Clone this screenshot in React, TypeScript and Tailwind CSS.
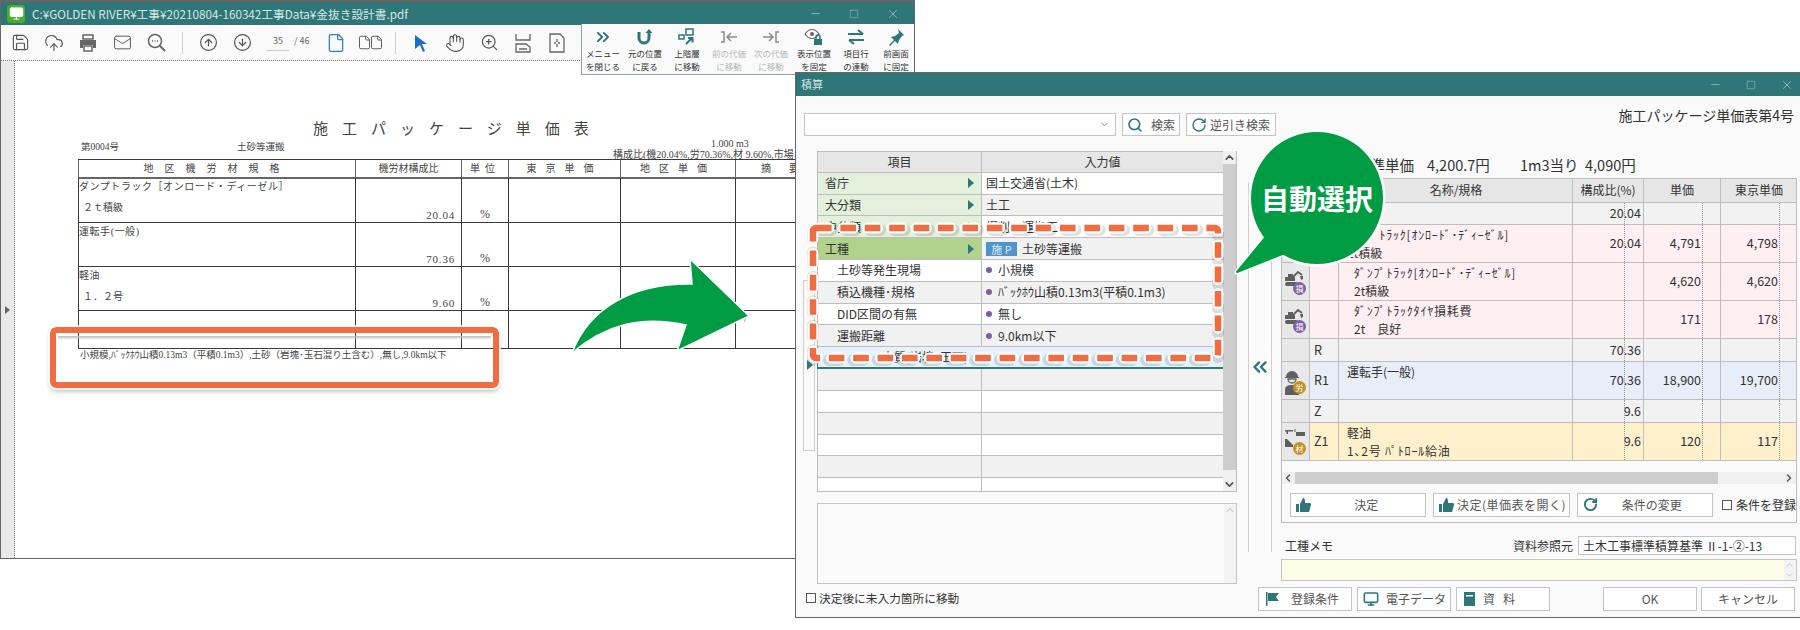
import {
  ChevronDown,
  ChevronLeft,
  ChevronRight,
  ChevronUp,
  ChevronsLeft,
  ChevronsRight,
  CircleArrowDown,
  CircleArrowUp,
  CloudUpload,
  File,
  Hand,
  Mail,
  Minus,
  Monitor,
  RotateCw,
  Save,
  Search,
  Square,
  X,
  ZoomIn,
} from "lucide-react";
import type { ReactNode } from "react";

const TEAL = "#2f7679";

function WinButtons({ gap }: { gap: string }) {
  return (
    <div className={`ml-auto flex items-center text-[#c9dedf] ${gap}`}>
      <Minus size={13} strokeWidth={1} />
      <Square size={10} strokeWidth={1} />
      <X size={14} strokeWidth={1} />
    </div>
  );
}

function Sep({ ml }: { ml: string }) {
  return <div className={`${ml} mr-[8px] h-[22px] w-px bg-[#cfcfcf]`} />;
}

function Tool({ children, w = "w-[34px]" }: { children: ReactNode; w?: string }) {
  return <div className={`flex ${w} shrink-0 items-center justify-center text-[#555]`}>{children}</div>;
}

/* ---------- flyout menu ---------- */
function MenuItem({ icon, a, b, off, w = "w-[42px]" }: { icon: ReactNode; a: string; b: string; off?: boolean; w?: string }) {
  return (
    <div className={`flex ${w} shrink-0 flex-col items-center ${off ? "text-[#b5b5b5]" : "text-[#333]"}`}>
      <div className="flex h-[20px] items-center justify-center">{icon}</div>
      <div className="whitespace-nowrap text-[8.5px] leading-[13px]">{a}</div>
      <div className="whitespace-nowrap text-[8.5px] leading-[13px]">{b}</div>
    </div>
  );
}

function Flyout() {
  return (
    <div className="absolute left-[581px] top-[24px] z-10 flex h-[51px] w-[333px] border-b border-l border-[#8c9fc0] bg-[#fafafa] pt-[3px]">
      <MenuItem
        a="メニュー"
        b="を閉じる"
        icon={<ChevronsRight size={20} color={TEAL} strokeWidth={2.4} />}
      />
      <MenuItem
        a="元の位置"
        b="に戻る"
        icon={
          <svg width="18" height="18" viewBox="0 0 18 18" fill="none" stroke={TEAL} strokeWidth="3">
            <path d="M3 4v6a5 5 0 0 0 10 0V4" />
            <path d="M9.5 5L13 1l3.5 4z" fill={TEAL} strokeWidth="0" />
          </svg>
        }
      />
      <MenuItem
        a="上階層"
        b="に移動"
        icon={
          <svg width="18" height="18" viewBox="0 0 18 18" fill="none" stroke={TEAL} strokeWidth="1.5">
            <rect x="8" y="1" width="7" height="6" />
            <rect x="1" y="7" width="5" height="4" />
            <path d="M8 16l6-6M10 10h4.5v4.5" strokeWidth="2" />
          </svg>
        }
      />
      <MenuItem
        off
        a="前の代価"
        b="に移動"
        icon={
          <svg width="18" height="14" viewBox="0 0 18 14" fill="none" stroke="#8a8a8a" strokeWidth="1.5">
            <path d="M1 2h3v10H1M17 7H8M11 3L7 7l4 4" />
          </svg>
        }
      />
      <MenuItem
        off
        a="次の代価"
        b="に移動"
        icon={
          <svg width="18" height="14" viewBox="0 0 18 14" fill="none" stroke="#8a8a8a" strokeWidth="1.5">
            <path d="M17 2h-3v10h3M1 7h9M7 3l4 4-4 4" />
          </svg>
        }
      />
      <MenuItem
        a="表示位置"
        b="を固定"
        w="w-[44px]"
        icon={
          <svg width="20" height="19" viewBox="0 0 20 19" fill="none">
            <path d="M1 6c4-6 10-6 14 0-4 6-10 6-14 0z" stroke="#666" strokeWidth="1.2" />
            <circle cx="8" cy="6" r="2" fill="#666" />
            <rect x="10" y="11" width="8" height="6" fill={TEAL} />
            <path d="M12 11V9a2 2 0 0 1 4 0v2" stroke={TEAL} strokeWidth="1.5" />
          </svg>
        }
      />
      <MenuItem
        a="項目行"
        b="の連動"
        w="w-[40px]"
        icon={
          <svg width="18" height="16" viewBox="0 0 18 16" fill="none" stroke={TEAL} strokeWidth="2">
            <path d="M1 5h15M11 1l5 4M17 11H2M7 15l-5-4" />
          </svg>
        }
      />
      <MenuItem
        a="前画面"
        b="に固定"
        w="w-[40px]"
        icon={
          <svg width="18" height="18" viewBox="0 0 18 18" fill={TEAL}>
            <path d="M11 1l6 6-2 1-3 4-1 4-3-3-5 5-1-1 5-5-3-3 4-1 4-3z" />
          </svg>
        }
      />
    </div>
  );
}

/* ---------- PDF window ---------- */
function PdfRow({ h, name, sub, ratio, last }: { h: string; name?: string; sub?: string; ratio?: string; last?: boolean }) {
  const cell = "border-b border-r border-[#3a3a3a]";
  return (
    <div className={`grid grid-cols-[278px_106px_47px_112px_115px_200px] ${h}`}>
      <div className={`${cell} border-l text-[10px] leading-[14px]`}>
        <div className="mt-[2px] tracking-[0.55px]">{name}</div>
        {sub && <div className="ml-[4px] mt-[7px]">{sub}</div>}
      </div>
      <div className={`${cell} flex items-end justify-end pr-[6px] text-[11px] leading-[14px] tracking-[0.8px]`}>{ratio}</div>
      <div className={`${cell} flex items-end justify-center text-[12px] leading-[15px]`}>{ratio ? "%" : ""}</div>
      <div className={`${cell} ${last ? "pl-[100px] text-[10px]" : ""}`}>{last ? "(" : ""}</div>
      <div className={cell} />
      <div className={`${cell} ${last ? "pl-[8px] text-[10px]" : ""}`}>{last ? "/" : ""}</div>
    </div>
  );
}

function PdfWindow() {
  return (
    <div className="absolute left-0 top-0 flex h-[559px] w-[915px] flex-col border border-t-2 border-[#666] bg-white">
      <div className="flex h-[23px] shrink-0 items-center pr-[14px] pl-[6px] text-[11.7px] text-[#d5e6e6]" style={{ background: TEAL }}>
        <div className="mr-[7px] flex h-[18px] w-[18px] items-center justify-center rounded-[3px] bg-[#43b02a]">
          <Monitor size={15} color="#fff" fill="#fff" strokeWidth={1.5} />
        </div>
        C:¥GOLDEN RIVER¥工事¥20210804-160342工事Data¥金抜き設計書.pdf
        <WinButtons gap="gap-[27px]" />
      </div>
      <div className="flex h-[36px] shrink-0 items-center border-b border-dotted border-[#777] bg-[#fafafa] pl-[2px]">
        <Tool><Save size={19} strokeWidth={1.4} /></Tool>
        <Tool><CloudUpload size={20} strokeWidth={1.4} /></Tool>
        <Tool>
          <svg width="18" height="18" viewBox="0 0 18 18" fill="#666">
            <path d="M4 1h10v4H4z" fill="none" stroke="#666" strokeWidth="1.5" />
            <path d="M1 6h16v8h-3v-3H4v3H1z" />
            <path d="M5 12h8v5H5z" fill="none" stroke="#666" strokeWidth="1.5" />
          </svg>
        </Tool>
        <Tool><Mail size={19} strokeWidth={1.2} /></Tool>
        <Tool>
          <svg width="19" height="19" viewBox="0 0 19 19" fill="none" stroke="#666" strokeWidth="1.5">
            <circle cx="8" cy="8" r="6.5" />
            <path d="M13 13l5 5" strokeWidth="2" />
            <path d="M5 8h1M7.5 8h1M10 8h1" />
          </svg>
        </Tool>
        <Sep ml="ml-[9px]" />
        <Tool><CircleArrowUp size={19} strokeWidth={1.5} /></Tool>
        <Tool><CircleArrowDown size={19} strokeWidth={1.5} /></Tool>
        <div className="ml-[8px] w-[22px] shrink-0 border-b border-[#ccc] pb-[3px] text-center text-[9px] text-[#666]">35</div>
        <div className="ml-[5px] w-[30px] shrink-0 pb-[3px] text-[9px] text-[#666]">/ 46</div>
        <Tool w="w-[24px]"><File size={20} strokeWidth={1.5} color="#2b7cd3" /></Tool>
        <Tool w="w-[44px]">
          <span className="flex gap-[1px]">
            <File size={15} strokeWidth={1.5} />
            <File size={15} strokeWidth={1.5} className="-ml-[4px]" />
          </span>
        </Tool>
        <Sep ml="ml-[3px]" />
        <Tool>
          <svg width="14" height="18" viewBox="0 0 14 18" fill="#1e6fc0">
            <path d="M1 1l12 9H8l3 7-2 1-3-7-5 4z" />
          </svg>
        </Tool>
        <Tool><Hand size={20} strokeWidth={1.3} /></Tool>
        <Tool><ZoomIn size={19} strokeWidth={1.5} /></Tool>
        <Tool>
          <svg width="16" height="20" viewBox="0 0 16 20" fill="none" stroke="#666" strokeWidth="1.3">
            <path d="M1 1v6h14V1M1 19v-8h10l4 3v5zM4 16h8" />
          </svg>
        </Tool>
        <Tool>
          <svg width="16" height="20" viewBox="0 0 16 20" fill="none" stroke="#666" strokeWidth="1.3">
            <path d="M1 1h10l4 4v14H1zM8 6v3M8 11v3M5 10h2M9 10h2" />
          </svg>
        </Tool>
      </div>
      <div className="flex min-h-0 flex-1">
        <div className="flex w-[14px] shrink-0 items-center justify-center border-r border-dotted border-[#777] bg-[#e9e9e9]">
          <span className="h-0 w-0 border-y-[4px] border-l-[5px] border-y-transparent border-l-[#666]" />
        </div>
        <div className="min-w-0 flex-1 overflow-hidden pl-[63px] pt-[58px] font-['Liberation_Serif','Noto_Sans_CJK_JP',serif] text-[#444]">
          <div className="ml-[235px] whitespace-nowrap text-[15px] leading-[20px] tracking-[14px]">施工パッケージ単価表</div>
          <div className="flex h-[20px] items-start text-[9.5px]">
            <div className="ml-[3px] mt-[1px] w-[156px] shrink-0">第0004号</div>
            <div className="mt-[1px] w-[376px] shrink-0">土砂等運搬</div>
            <div className="whitespace-nowrap text-[10px]">
              <div className="ml-[98px] leading-[10px]">1.000 m3</div>
              <div className="leading-[12px]">構成比(機20.04%,労70.36%,材 9.60%,市場</div>
            </div>
          </div>
          <div className="grid h-[19px] grid-cols-[278px_106px_47px_112px_115px_200px] border-t border-[#3a3a3a] text-center text-[10px] leading-[17px]">
            <div className="border-b-2 border-l border-r border-[#666] tracking-[11px]">地区機労材規格</div>
            <div className="border-b-2 border-r border-[#666]">機労材構成比</div>
            <div className="border-b-2 border-r border-[#666] tracking-[5px]">単位</div>
            <div className="border-b-2 border-r border-[#666] tracking-[9px]">東京単価</div>
            <div className="border-b-2 border-r border-[#666] tracking-[9px]">地区単価</div>
            <div className="border-b-2 border-r border-[#666] pl-[25px] text-left tracking-[18px]">摘要</div>
          </div>
          <PdfRow h="h-[45px]" name="ダンプトラック［オンロード・ディーゼル］" sub="２ｔ積級" ratio="20.04" />
          <PdfRow h="h-[44px]" name="運転手(一般)" ratio="70.36" />
          <PdfRow h="h-[44px]" name="軽油" sub="１．２号" ratio="9.60" />
          <PdfRow h="h-[38px]" last />
          <div className="ml-[2px] mt-[-1px] whitespace-nowrap pt-[1px] text-[9.5px] leading-[12px]">
            小規模,ﾊﾞｯｸﾎｳ山積0.13m3（平積0.1m3）,土砂（岩塊･玉石混り土含む）,無し,9.0km以下
          </div>
        </div>
      </div>
    </div>
  );
}

/* ---------- estimate window, left pane ---------- */
const Bullet = () => <span className="mr-[6px] inline-block h-[6px] w-[6px] rounded-full bg-[#7b5ea7]" />;

type InputRow = { l: string; r?: string; kind: "green" | "sel" | "sub" | "blank"; bullet?: boolean; badge?: boolean };

const INPUT_ROWS: InputRow[] = [
  { l: "省庁", r: "国土交通省(土木)", kind: "green" },
  { l: "大分類", r: "土工", kind: "green" },
  { l: "中分類", r: "掘削・運搬工", kind: "green" },
  { l: "工種", r: "土砂等運搬", kind: "sel", badge: true },
  { l: "土砂等発生現場", r: "小規模", kind: "sub", bullet: true },
  { l: "積込機種･規格", r: "ﾊﾞｯｸﾎｳ山積0.13m3(平積0.1m3)", kind: "sub", bullet: true },
  { l: "DID区間の有無", r: "無し", kind: "sub", bullet: true },
  { l: "運搬距離", r: "9.0km以下", kind: "sub", bullet: true },
];

function InputGrid() {
  return (
    <div className="flex h-[341px] w-[420px] border-b border-r border-[#bdbdbd] text-[12px] text-[#333]">
      <div className="flex w-[407px] flex-col overflow-hidden">
        <div className="grid h-[21.8px] shrink-0 grid-cols-[164px_1fr] border-b border-l border-t border-[#bdbdbd] bg-[#e6e6e6] text-center leading-[20px]">
          <div className="border-r border-[#bdbdbd]">項目</div>
          <div>入力値</div>
        </div>
        {INPUT_ROWS.map((row, i) => {
          const odd = i % 2 === 1;
          const left =
            row.kind === "green" ? "bg-[#e3f0db] pl-[7px]" : row.kind === "sel" ? "bg-[#b0d28c] pl-[7px]" : `${odd ? "bg-[#f1f1f1]" : "bg-white"} pl-[19px]`;
          return (
            <div key={row.l} className={`grid h-[21.8px] shrink-0 grid-cols-[164px_1fr] border-b border-l border-[#bdbdbd] leading-[20px]`}>
              <div className={`flex items-center justify-between border-r border-[#bdbdbd] pr-[7px] ${left}`}>
                {row.l}
                {(row.kind === "green" || row.kind === "sel") && (
                  <span className="h-0 w-0 border-y-[5px] border-l-[6px] border-y-transparent" style={{ borderLeftColor: TEAL }} />
                )}
              </div>
              <div className={`flex items-center whitespace-nowrap pl-[4px] ${odd ? "bg-[#f1f1f1]" : "bg-white"}`}>
                {row.badge && (
                  <span className="mr-[5px] flex h-[14px] w-[31px] items-center justify-center bg-[#4f94cd] text-[11px] text-[#dcecf8]">施 P</span>
                )}
                {row.bullet && <Bullet />}
                {row.r}
              </div>
            </div>
          );
        })}
        <div className="grid h-[22px] shrink-0 grid-cols-[164px_1fr] border-b-2 border-l border-[#2f7679] bg-[#e6f2fb]">
          <div className="flex items-center pl-[36px] text-[12px]">
            <span className="mr-[20px] h-0 w-0 border-x-[4px] border-b-[8px] border-x-transparent" style={{ borderBottomColor: TEAL }} />
            土質(岩塊･玉石)
          </div>
          <div />
        </div>
        {[0, 1, 2, 3, 4].map((i) => (
          <div key={i} className={`grid h-[21.8px] shrink-0 grid-cols-[164px_1fr] border-b border-l border-[#bdbdbd] ${i % 2 === 0 ? "bg-[#f1f1f1]" : "bg-white"}`}>
            <div className="border-r border-[#bdbdbd]" />
          </div>
        ))}
        <div className="grid flex-1 grid-cols-[164px_1fr] border-l border-[#bdbdbd] bg-white">
          <div className="border-r border-[#bdbdbd]" />
        </div>
      </div>
      <div className="flex w-[13px] flex-col bg-[#f0f0f0]">
        <ChevronUp size={13} strokeWidth={3} color="#555" />
        <div className="flex-1 bg-[#cdcdcd]" />
        <div className="h-[8px]" />
        <ChevronDown size={13} strokeWidth={3} color="#555" />
      </div>
    </div>
  );
}

function LeftPane() {
  return (
    <div className="w-[452px] shrink-0 pt-[17px]">
      <div className="ml-[8px] flex h-[23px] gap-[6px] text-[12px] text-[#555]">
        <div className="flex w-[312px] shrink-0 items-center justify-end border border-[#c4c4c4] bg-white pr-[5px]">
          <ChevronDown size={11} color="#777" />
        </div>
        <div className="flex w-[58px] shrink-0 items-center gap-[8px] border border-[#c4c4c4] bg-white pl-[4px]">
          <Search size={16} color={TEAL} strokeWidth={2.4} />
          検索
        </div>
        <div className="flex w-[90px] shrink-0 items-center gap-[3px] whitespace-nowrap border border-[#c4c4c4] bg-white pl-[4px]">
          <RotateCw size={16} color={TEAL} strokeWidth={2} />
          逆引き検索
        </div>
      </div>
      <div className="mt-[15px] flex">
        <div className="w-[21px] shrink-0 pl-[7px] pt-[129px]">
          <div className="relative h-[171px] w-[12px] border border-[#cfcfcf]">
            <span
              className="absolute left-[3px] top-[79px] h-0 w-0 border-y-[5px] border-l-[6px] border-y-transparent"
              style={{ borderLeftColor: TEAL }}
            />
          </div>
        </div>
        <InputGrid />
      </div>
      <div className="ml-[21px] mt-[11px] flex h-[81px] w-[420px] justify-end border border-[#c4c4c4] bg-[#fbfbfb]">
        <div className="w-[12px] bg-[#f3f3f3]">
          <ChevronUp size={12} strokeWidth={2.5} color="#cfcfcf" />
        </div>
      </div>
      <div className="ml-[10px] mt-[5px] flex items-center gap-[3px] text-[11.7px] text-[#333]">
        <span className="h-[10px] w-[10px] border border-[#555] bg-white" />
        決定後に未入力箇所に移動
      </div>
    </div>
  );
}

/* ---------- estimate window, right pane ---------- */
function Excavator() {
  return (
    <svg width="20" height="15" viewBox="0 0 20 15" fill="#5f5f5f">
      <path d="M1 6h3V3h5v3h2v4H1z" />
      <path d="M9 6l5-5 4 3" fill="none" stroke="#5f5f5f" strokeWidth="1.8" />
      <path d="M16 5h3v3l-2 1z" />
      <rect x="1" y="11" width="13" height="4" rx="2" />
    </svg>
  );
}

function Worker() {
  return (
    <svg width="17" height="26" viewBox="0 0 17 26" fill="#5f5f5f">
      <path d="M2 8a6 6 0 0 1 12 0h1v1H1V8z" />
      <path d="M4 10h8a4 4 0 0 1-8 0z" fill="none" stroke="#5f5f5f" strokeWidth="1.3" />
      <path d="M1 26v-5c0-4 3-5 7-5s7 1 7 5v5z" />
    </svg>
  );
}

function Material() {
  return (
    <svg width="22" height="18" viewBox="0 0 22 18" fill="#5f5f5f">
      <path d="M1 1h8v1.5H4V5H2.5V2.5H1z" />
      <rect x="12" y="3" width="9" height="4" />
      <path d="M10.5 0h1v3h-1z" />
      <path d="M1 10h2l6 6v2H1z" />
    </svg>
  );
}

function IconCell({ icon, badge, color, pt }: { icon: ReactNode; badge: string; color: string; pt: string }) {
  return (
    <div className={`relative flex h-full justify-start bg-[#e8e8e8] pl-[2px] ${pt}`}>
      <div>{icon}</div>
      <span
        className="absolute bottom-[5px] left-[11px] flex h-[13px] w-[13px] items-center justify-center rounded-full text-[8px] leading-none text-white"
        style={{ background: color }}
      >
        {badge}
      </span>
    </div>
  );
}

type PriceRow = {
  h: string;
  bg: string;
  code?: string;
  name?: string;
  sub?: string;
  indent?: boolean;
  wideName?: boolean;
  wideSub?: boolean;
  ratio?: string;
  unit?: string;
  tokyo?: string;
  icon?: ReactNode;
};

const PURPLE = "#7e5fa8";
const AMBER = "#c8901e";

const PRICE_ROWS: PriceRow[] = [
  { h: "h-[22px]", bg: "bg-[#f2f2f2]", ratio: "20.04" },
  { h: "h-[38px]", bg: "bg-[#fef0f2]", wideName: true, name: "ﾀﾞﾝﾌﾟﾄﾗｯｸ[ｵﾝﾛｰﾄﾞ･ﾃﾞｨｰｾﾞﾙ]", sub: "2t積級", ratio: "20.04", unit: "4,791", tokyo: "4,798" },
  { h: "h-[38px]", bg: "bg-[#fef0f2]", indent: true, wideName: true, name: "ﾀﾞﾝﾌﾟﾄﾗｯｸ[ｵﾝﾛｰﾄﾞ･ﾃﾞｨｰｾﾞﾙ]", sub: "2t積級", unit: "4,620", tokyo: "4,620", icon: <IconCell icon={<Excavator />} badge="損" color={PURPLE} pt="pt-[8px]" /> },
  { h: "h-[38px]", bg: "bg-[#fef0f2]", indent: true, wideName: true, name: "ﾀﾞﾝﾌﾟﾄﾗｯｸﾀｲﾔ損耗費", sub: "2t　良好", unit: "171", tokyo: "178", icon: <IconCell icon={<Excavator />} badge="損" color={PURPLE} pt="pt-[8px]" /> },
  { h: "h-[23px]", bg: "bg-[#f2f2f2]", code: "R", ratio: "70.36" },
  { h: "h-[38px]", bg: "bg-[#e8eef7]", code: "R1", name: "運転手(一般)", ratio: "70.36", unit: "18,900", tokyo: "19,700", icon: <IconCell icon={<Worker />} badge="労" color={AMBER} pt="pt-[7px]" /> },
  { h: "h-[23px]", bg: "bg-[#f2f2f2]", code: "Z", ratio: "9.6" },
  { h: "h-[38px]", bg: "bg-[#fef0cb]", code: "Z1", name: "軽油", sub: "1､2号 ﾊﾟﾄﾛｰﾙ給油", wideSub: true, ratio: "9.6", unit: "120", tokyo: "117", icon: <IconCell icon={<Material />} badge="材" color={AMBER} pt="pt-[6px]" /> },
];

const COLS = "grid-cols-[28px_29px_234px_71px_77px_76px]";

function NumCell({ value, dotAt, pr }: { value?: string; dotAt: string; pr: string }) {
  return (
    <div className={`relative flex items-center justify-end border-r border-[#bdbdbd] ${pr}`}>
      {value}
      <span className={`absolute top-0 h-full border-r border-dotted border-[#999] ${dotAt}`} />
    </div>
  );
}

function PriceGrid() {
  return (
    <div className="text-[12.5px] text-[#333]">
      <div className={`grid h-[24px] ${COLS} border-b border-[#bdbdbd] bg-[#e6e6e6] text-center text-[12px] leading-[22px]`}>
        <div />
        <div />
        <div className="border-r border-[#bdbdbd] pl-[1px]">名称/規格</div>
        <div className="border-r border-[#bdbdbd]">構成比(%)</div>
        <div className="border-r border-[#bdbdbd]">単価</div>
        <div>東京単価</div>
      </div>
      {PRICE_ROWS.map((row, i) => (
        <div key={i} className={`grid ${row.h} ${COLS} border-b border-[#bdbdbd] ${row.bg}`}>
          <div className="border-r border-[#bdbdbd] bg-[#e8e8e8]">{row.icon}</div>
          <div className="flex items-center border-r border-[#bdbdbd] pl-[4px]">{row.code}</div>
          <div className={`overflow-hidden whitespace-nowrap border-r border-[#bdbdbd] text-[12px] leading-[18px] ${row.indent ? "pl-[15px]" : "pl-[8px]"} pt-[1px]`}>
            <div className={row.wideName ? "tracking-[0.8px]" : ""}>{row.name}</div>
            <div className={row.wideSub ? "tracking-[0.8px]" : ""}>{row.sub}</div>
          </div>
          <NumCell value={row.ratio} dotAt="right-[18px]" pr="pr-[2px]" />
          <NumCell value={row.unit} dotAt="right-[17px]" pr="pr-[19px]" />
          <NumCell value={row.tokyo} dotAt="right-[16px]" pr="pr-[18px]" />
        </div>
      ))}
    </div>
  );
}

function ActionButton({ icon, label, w = "w-[137px]", pl = "" }: { icon?: ReactNode; label: string; w?: string; pl?: string }) {
  return (
    <div className={`relative flex h-[24px] ${w} ${pl} items-center justify-center whitespace-nowrap border border-[#c4c4c4] bg-white text-[12px] text-[#555]`}>
      {icon && <span className="absolute left-[5px] top-[3px]">{icon}</span>}
      {label}
    </div>
  );
}

function Thumb() {
  return (
    <svg width="15" height="16" viewBox="0 0 15 16" fill={TEAL}>
      <path d="M0 7h3v8H0zM4 7l3-6c2 0 2 2 2 5h5c1 0 1 1 1 2l-2 7H4z" />
    </svg>
  );
}

function RightPane() {
  return (
    <div className="ml-[9px] w-[516px] shrink-0 pt-[10px]">
      <div className="h-[18px] pr-[3px] text-right text-[14px] leading-[18px] text-[#333]">施工パッケージ単価表第4号</div>
      <div className="mt-[31px] flex h-[20px] whitespace-pre pl-[75px] text-[14.5px] leading-[20px] text-[#333]">
        <span className="w-[71px]">標準単価</span>
        <span className="w-[93px]">4,200.7円</span>
        <span>1m3当り  4,090円</span>
      </div>
      <div className="mt-[3px] h-[345px] border border-[#bdbdbd]">
        <PriceGrid />
        <div className="mt-[11px] flex h-[12px] items-center bg-[#f0f0f0]">
          <ChevronLeft size={12} strokeWidth={3} color="#555" className="shrink-0" />
          <div className="ml-[1px] h-full w-[423px] bg-[#cdcdcd]" />
          <ChevronRight size={12} strokeWidth={3} color="#555" className="ml-auto mr-[1px]" />
        </div>
        <div className="ml-[8px] mt-[9px] flex gap-[7px]">
          <ActionButton label="決定" pl="pl-[16px]" icon={<Thumb />} />
          <ActionButton label="決定(単価表を開く)" pl="pl-[20px] tracking-[0.5px]" icon={<Thumb />} />
          <ActionButton label="条件の変更" pl="pl-[14px]" icon={<RotateCw size={15} color={TEAL} strokeWidth={3} />} />
          <div className="ml-[2px] flex items-center gap-[4px] whitespace-nowrap text-[12px] text-[#333]">
            <span className="h-[10px] w-[10px] shrink-0 border border-[#555] bg-white" />
            条件を登録
          </div>
        </div>
      </div>
      <div className="mt-[13px] flex h-[19px] items-center pl-[4px] pr-[1px] text-[12px] text-[#333]">
        工種メモ
        <span className="ml-auto mr-[5px]">資料参照元</span>
        <div className="h-full w-[218px] border border-[#c4c4c4] bg-white pl-[4px] text-[12px] leading-[18px]">土木工事標準積算基準 Ⅱ-1-②-13</div>
      </div>
      <div className="mt-[4px] flex h-[22px] justify-end border border-[#c4c4c4] bg-[#fefee8]">
        <div className="flex w-[12px] flex-col justify-between bg-[#f3f3f3]">
          <ChevronUp size={11} color="#bbb" />
          <ChevronDown size={11} color="#bbb" />
        </div>
      </div>
      <div className="mt-[6px] flex text-[12px] text-[#555]">
        <div className="ml-[-23px] flex gap-[5px]">
          <ActionButton
            label="登録条件"
            w="w-[94px]"
            pl="pl-[20px]"
            icon={
              <svg width="16" height="16" viewBox="0 0 16 16" fill={TEAL}>
                <path d="M2 1h1.5v14H2zM4 2h11l-3 4 3 4H4z" />
              </svg>
            }
          />
          <ActionButton
            label="電子データ"
            w="w-[94px]"
            pl="pl-[24px]"
            icon={<Monitor size={16} color={TEAL} strokeWidth={2.4} />}
          />
          <ActionButton
            label="資料"
            w="w-[94px]"
            pl="tracking-[8px]"
            icon={
              <svg width="15" height="16" viewBox="0 0 15 16" fill={TEAL}>
                <path d="M2 1h11v14H2zM4 4h7v1.5H4z" fillRule="evenodd" />
              </svg>
            }
          />
        </div>
        <div className="ml-auto mr-[2px] flex gap-[4px]">
          <ActionButton label="OK" w="w-[94px]" />
          <ActionButton label="キャンセル" w="w-[94px]" />
        </div>
      </div>
    </div>
  );
}

function EstimateWindow() {
  return (
    <div className="absolute left-[795px] top-[72px] z-20 flex h-[546px] w-[1005px] flex-col border-b border-l border-t border-[#666] bg-[#fafafa]">
      <div className="flex h-[23px] shrink-0 items-center pl-[5px] pr-[6px] text-[11px] text-[#d5e6e6]" style={{ background: TEAL }}>
        積算
        <WinButtons gap="gap-[24px]" />
      </div>
      <div className="flex min-h-0 flex-1">
        <LeftPane />
        <div className="mt-[86px] flex h-[370px] w-[24px] shrink-0 items-center justify-center border-x border-[#cfcfcf] bg-[#fbfbfb]">
          <ChevronsLeft size={24} color={TEAL} strokeWidth={2.6} />
        </div>
        <RightPane />
      </div>
    </div>
  );
}

/* ---------- callouts over the windows ---------- */
function Callouts() {
  const dash = { x: 813, y: 228, width: 405, height: 130, rx: 3 };
  return (
    <>
      {/* orange frame around the condition text */}
      <div className="absolute left-[50px] top-[327px] z-10 h-[61px] w-[449px] rounded-[6px] border-[6px] border-[#f16c41] outline-2 outline-white/80 shadow-[0_3px_5px_rgba(0,0,0,0.3)]">
        <div className="absolute inset-x-[2px] top-[3px] h-[4px] bg-gradient-to-b from-[#bbb] to-transparent" />
      </div>

      {/* green arrow */}
      <svg className="absolute left-[570px] top-[255px] z-10" width="182" height="100" viewBox="570 255 182 100">
        <path
          d="M572 353C588 310 630 283 692 284L690 259L749 316L677 351L686 325C640 315 605 325 572 353Z"
          fill="#009c44"
          stroke="#fff"
          strokeWidth="1.5"
        />
      </svg>

      {/* dashed frame around the auto selected rows */}
      <svg className="absolute left-0 top-0 z-30" width="1800" height="630" viewBox="0 0 1800 630" fill="none">
        <rect {...dash} stroke="#000" strokeOpacity="0.12" strokeWidth="12" strokeLinecap="round" strokeDasharray="10 14.4" strokeDashoffset="-5.4" transform="translate(0 2)" />
        <rect {...dash} stroke="#fff" strokeWidth="11" strokeLinecap="round" strokeDasharray="10 14.4" strokeDashoffset="-2.8" />
        <rect {...dash} stroke="#f16c41" strokeWidth="6.5" strokeDasharray="15.6 8.8" />
      </svg>

      {/* speech bubble */}
      <svg className="absolute left-[1230px] top-[128px] z-30" width="160" height="150" viewBox="1230 128 160 150">
        <g stroke="#fff" strokeWidth="5" strokeLinejoin="round" fill="#fff">
          <circle cx="1317" cy="198" r="66" />
          <path d="M1265 238L1237 272L1285 253Z" />
        </g>
        <circle cx="1317" cy="198" r="66" fill="#009c44" />
        <path d="M1265 238L1237 272L1285 253Z" fill="#009c44" stroke="#009c44" strokeLinejoin="round" strokeWidth="2" />
      </svg>
      <div className="absolute left-[1261px] top-[178px] z-30 text-[28px] font-bold leading-[40px] text-white">自動選択</div>
    </>
  );
}

export default function App() {
  return (
    <div className="relative h-[630px] w-[1800px] overflow-hidden bg-white font-['Noto_Sans_CJK_JP','Noto_Sans',sans-serif]">
      <PdfWindow />
      <Flyout />
      <Callouts />
      <EstimateWindow />
    </div>
  );
}
